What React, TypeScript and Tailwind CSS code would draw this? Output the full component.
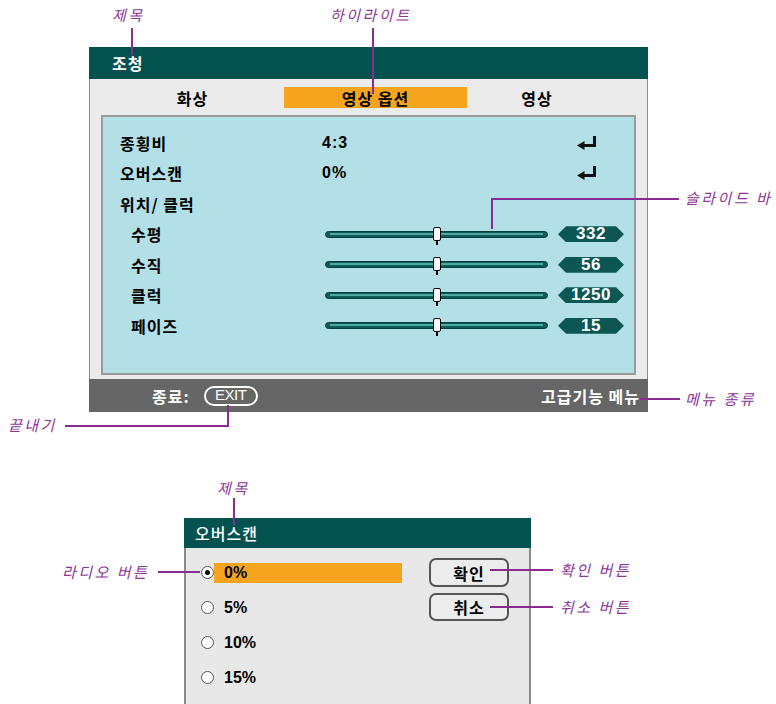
const ko = "font-['Noto_Sans_CJK_KR','Noto_Sans',sans-serif]";
const num = "font-['Liberation_Sans',Arial,sans-serif]";

function EnterIcon() {
  return (
    <svg width="20" height="14" viewBox="0 0 20 14" className="block">
      <path d="M16 0h3v11H7V8h9z" fill="#111" />
      <path d="M0 9.5L7.5 5v9z" fill="#111" />
    </svg>
  );
}

function Slider({ value }: { value: string }) {
  return (
    <div className="flex items-center ml-[3px]">
      <div className="relative w-[223px] h-[7px] rounded-full bg-[#0d5a56] border border-[#073f3c]">
        <div className="mx-[4px] mt-[1px] h-[2px] bg-[#4fa9a2]" />
        <div className="absolute left-[107px] top-[-5px] w-[8px] h-[14px] bg-white border-[1.5px] border-black rounded-[2px]" />
        <div className="absolute left-[110px] top-[9px] w-[1.5px] h-[4px] bg-black" />
      </div>
      <div
        className={`ml-[10px] w-[66px] h-[16px] bg-[#0c5753] text-white text-[17px] font-bold leading-[16px] text-center tracking-[0.5px] ${num} [clip-path:polygon(8px_0,calc(100%_-_8px)_0,100%_50%,calc(100%_-_8px)_100%,8px_100%,0_50%)]`}
      >
        {value}
      </div>
    </div>
  );
}

function Radio({ checked }: { checked?: boolean }) {
  return (
    <div className="w-[13px] h-[13px] rounded-full bg-white border-[1.5px] border-[#555] flex items-center justify-center shrink-0">
      {checked && <div className="w-[5px] h-[5px] rounded-full bg-black" />}
    </div>
  );
}

const note = `absolute text-[15px] leading-[20px] italic tracking-[2.5px] text-[#8a3597] whitespace-nowrap ${ko}`;

export default function App() {
  const sliders = [
    { label: "수평", value: "332" },
    { label: "수직", value: "56" },
    { label: "클럭", value: "1250" },
    { label: "페이즈", value: "15" },
  ];
  const options = ["0%", "5%", "10%", "15%"];

  return (
    <div className={`relative w-[776px] h-[704px] bg-white overflow-hidden ${ko}`}>
      {/* main menu */}
      <div className="mt-[47px] ml-[89px] w-[559px]">
        <div className="h-[32px] bg-[#03524f] pl-[23px] flex items-center text-white text-[16px] font-bold tracking-[1px]">
          조청
        </div>
        <div className="bg-[#ebebeb] border-x border-[#8c8c8c] px-[11px] pb-[4px]">
          <div className="h-[36px] pt-[8px] flex text-[16px] font-bold text-black tracking-[1px]">
            <div className="w-[183px] h-[21px] flex items-center justify-center">화상</div>
            <div className="w-[183px] h-[21px] flex items-center justify-center bg-[#f5a51d]">영상 옵션</div>
            <div className="flex-1 h-[21px] flex items-center justify-center pr-[29px]">영상</div>
          </div>
          <div className="h-[260px] bg-[#b3dfe6] border-2 border-[#9a9a9a] pt-[11px] pl-[17px] text-[16px] font-bold text-black tracking-[1px]">
            <div className="h-[30px] flex items-center">
              <div className="w-[202px]">종횡비</div>
              <div className={`w-[255px] text-[16px] ${num}`}>4:3</div>
              <EnterIcon />
            </div>
            <div className="h-[30px] flex items-center">
              <div className="w-[202px]">오버스캔</div>
              <div className={`w-[255px] text-[16px] ${num}`}>0%</div>
              <EnterIcon />
            </div>
            <div className="h-[31px] flex items-center">위치/ 클럭</div>
            {sliders.map((s) => (
              <div key={s.label} className="h-[30.5px] flex items-center">
                <div className="w-[202px] pl-[11px]">{s.label}</div>
                <Slider value={s.value} />
              </div>
            ))}
          </div>
        </div>
        <div className="h-[33px] bg-[#666666] flex items-center pl-[63px] pr-[8px] text-white text-[16px] font-bold tracking-[1px]">
          <span>종료:</span>
          <span className={`ml-[14px] w-[54px] h-[20px] rounded-full border-2 border-white flex items-center justify-center text-[15px] font-normal tracking-[-0.5px] ${num}`}>
            EXIT
          </span>
          <span className="ml-auto">고급기능 메뉴</span>
        </div>
      </div>

      {/* overscan dialog */}
      <div className="mt-[106px] ml-[184px] w-[347px]">
        <div className="h-[30px] bg-[#02524f] pl-[11px] flex items-center text-white text-[16px] font-medium tracking-[1px]">
          오버스캔
        </div>
        <div className="h-[200px] bg-[#e8e8e8] border-x-2 border-[#8a8a8a] flex">
          <div className="pt-[7px] pl-[15px]">
            {options.map((o, i) => (
              <div key={o} className="h-[35px] flex items-center">
                <Radio checked={i === 0} />
                <div
                  className={`w-[188px] h-[20px] pl-[10px] flex items-center text-[16px] font-bold text-black ${num} ${i === 0 ? "bg-[#f5a51d]" : ""}`}
                >
                  {o}
                </div>
              </div>
            ))}
          </div>
          <div className="ml-[27px] pt-[10px] flex flex-col gap-[6px]">
            <div className="w-[80px] h-[29px] rounded-[7px] border-2 border-[#555] bg-[#ececec] flex items-center justify-center text-[16px] font-bold tracking-[1px]">
              확인
            </div>
            <div className="w-[80px] h-[28px] rounded-[7px] border-2 border-[#555] bg-[#ececec] flex items-center justify-center text-[16px] font-bold tracking-[1px]">
              취소
            </div>
          </div>
        </div>
      </div>

      {/* callouts */}
      <div className={`${note} left-[112px] top-[5px]`}>제목</div>
      <div className="absolute left-[131px] top-[28px] w-[2px] h-[27px] bg-[#8a2b90]" />

      <div className={`${note} left-[330px] top-[5px]`}>하이라이트</div>
      <div className="absolute left-[372px] top-[28px] w-[2px] h-[66px] bg-[#8a2b90]" />

      <div className={`${note} left-[685px] top-[188px]`}>슬라이드 바</div>
      <div className="absolute left-[491px] top-[198px] w-[2px] h-[31px] bg-[#8a2b90]" />
      <div className="absolute left-[491px] top-[198px] w-[188px] h-[2px] bg-[#8a2b90]" />

      <div className={`${note} left-[8px] top-[415px]`}>끝내기</div>
      <div className="absolute left-[65px] top-[425px] w-[164px] h-[2px] bg-[#8a2b90]" />
      <div className="absolute left-[227px] top-[405px] w-[2px] h-[22px] bg-[#8a2b90]" />

      <div className={`${note} left-[685px] top-[389px]`}>메뉴 종류</div>
      <div className="absolute left-[640px] top-[398px] w-[40px] h-[2px] bg-[#8a2b90]" />

      <div className={`${note} left-[217px] top-[478px]`}>제목</div>
      <div className="absolute left-[233px] top-[498px] w-[2px] h-[27px] bg-[#8a2b90]" />

      <div className={`${note} left-[62px] top-[562px]`}>라디오 버튼</div>
      <div className="absolute left-[158px] top-[571px] w-[42px] h-[2px] bg-[#8a2b90]" />

      <div className={`${note} left-[560px] top-[560px]`}>확인 버튼</div>
      <div className="absolute left-[490px] top-[569px] w-[63px] h-[2px] bg-[#8a2b90]" />

      <div className={`${note} left-[560px] top-[597px]`}>취소 버튼</div>
      <div className="absolute left-[490px] top-[606px] w-[63px] h-[2px] bg-[#8a2b90]" />
    </div>
  );
}
